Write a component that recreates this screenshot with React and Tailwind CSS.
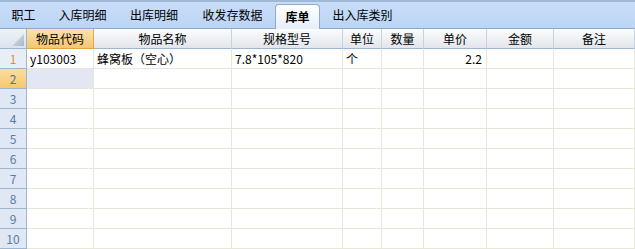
import React from "react";

const tabs = [
  { label: "职工", w: "w-[47px]" },
  { label: "入库明细", w: "w-[71px]" },
  { label: "出库明细", w: "w-[72px]" },
  { label: "收发存数据", w: "w-[85px]" },
  { label: "库单", w: "w-[45px]", active: true },
  { label: "出入库类别", w: "w-[85px]" },
];

const columns = ["物品代码", "物品名称", "规格型号", "单位", "数量", "单价", "金额", "备注"];

const rows = [
  ["y103003", "蜂窝板（空心）", "7.8*105*820", "个", "", "2.2", "", ""],
  ...Array.from({ length: 9 }, () => ["", "", "", "", "", "", "", ""]),
];

const gridCols = "grid-cols-[27px_67px_138px_111px_39px_42px_63px_67px_1fr]";

const App = () => {
  return (
    <div
      className="w-[635px] h-[249px] overflow-hidden bg-white text-[12px] text-black"
      style={{ fontFamily: '"Noto Sans CJK SC", "Noto Sans", sans-serif' }}
    >
      {/* tab strip */}
      <div className="flex items-end h-[29px] bg-gradient-to-b from-[#c9ddf8] to-[#bcd5f6] border-t-2 border-t-[#9fb8d6] border-b border-b-[#8ea9c9]">
        {tabs.map((t) =>
          t.active ? (
            <div
              key={t.label}
              className={`${t.w} h-[25px] -mb-px flex items-center justify-center rounded-t-[4px] border border-b-0 border-[#8ea9c9] bg-gradient-to-b from-white to-[#e6eef8] font-bold`}
            >
              {t.label}
            </div>
          ) : (
            <div key={t.label} className={`${t.w} h-[26px] flex items-center justify-center`}>
              {t.label}
            </div>
          )
        )}
      </div>

      {/* header row */}
      <div className={`grid ${gridCols} h-[20px]`}>
        <div className="relative border-r border-b border-[#9eb6ce] bg-gradient-to-b from-[#eef2f8] to-[#dbe4ef]">
          <svg className="absolute right-[2px] bottom-[2px]" width="12" height="12" viewBox="0 0 12 12">
            <defs>
              <linearGradient id="tri" x1="0" y1="0" x2="1" y2="1">
                <stop offset="0" stopColor="#dfe5ee" />
                <stop offset="1" stopColor="#aab6c6" />
              </linearGradient>
            </defs>
            <polygon points="12,0 12,12 0,12" fill="url(#tri)" />
          </svg>
        </div>
        {columns.map((c, i) => (
          <div
            key={c}
            className={`flex items-center justify-center border-b border-r ${
              i === 0
                ? "border-[#e0a84a] bg-gradient-to-b from-[#fce3ad] to-[#f6c670]"
                : "border-b-[#9eb6ce] border-r-[#c9d3df] bg-gradient-to-b from-[#fbfcfd] to-[#e2e6ec]"
            }`}
          >
            {c}
          </div>
        ))}
      </div>

      {/* data rows */}
      {rows.map((r, ri) => (
        <div key={ri} className={`grid ${gridCols} h-[20px]`}>
          <div
            className={`flex items-center justify-center border-r border-b border-[#9eb6ce] ${
              ri === 1
                ? "bg-gradient-to-b from-[#fbdc9f] to-[#f5c86f] text-[#5b6f88]"
                : ri === 0
                ? "bg-[#e8eef7] text-[#d8902c]"
                : "bg-[#dfe8f4] text-[#5a7ba3]"
            }`}
          >
            {ri + 1}
          </div>
          {r.map((v, ci) => (
            <div
              key={ci}
              className={`flex items-center px-[3px] border-r border-b border-[#e9e6da] whitespace-nowrap ${
                ci === 5 ? "justify-end pr-[4px]" : ""
              } ${ri === 1 && ci === 0 ? "bg-[#e3e7f3]" : ""}`}
            >
              {v}
            </div>
          ))}
        </div>
      ))}
    </div>
  );
};

export default App;
